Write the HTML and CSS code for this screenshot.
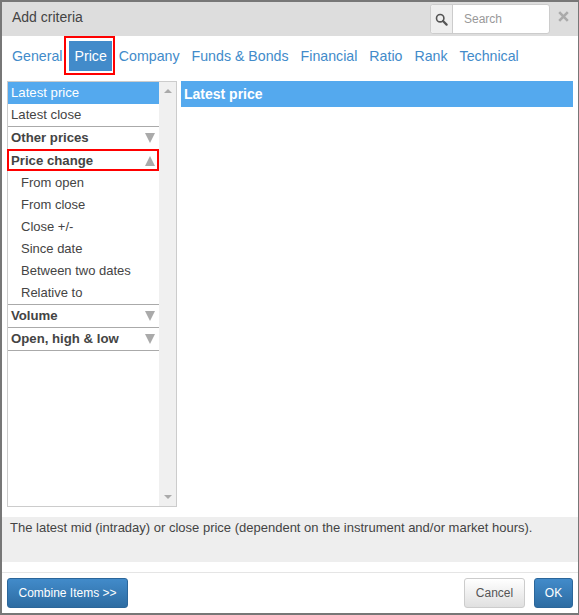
FILE: index.html
```html
<!DOCTYPE html>
<html lang="en">
<head>
<meta charset="utf-8">
<title>Add criteria</title>
<link rel="stylesheet" href="styles.css">
</head>
<body>
<div class="dialog">
  <header class="head">
    <h1 class="title">Add criteria</h1>
    <div class="search">
      <span class="search-icon">
        <svg width="13" height="13" viewBox="0 0 13 13"><circle cx="5.2" cy="5.2" r="3.7" fill="none" stroke="#555" stroke-width="1.6"/><path d="M8 8 L11.6 11.6" stroke="#555" stroke-width="2.2" stroke-linecap="round"/></svg>
      </span>
      <span class="search-input">Search</span>
    </div>
    <span class="close">
      <svg width="11" height="11" viewBox="0 0 11 11"><path d="M1.2 1.2 L9.8 9.8 M9.8 1.2 L1.2 9.8" stroke="#aaa" stroke-width="2.6"/></svg>
    </span>
  </header>
  <nav class="tabs">
    <a class="tab">General</a>
    <a class="tab active">Price</a>
    <a class="tab">Company</a>
    <a class="tab">Funds &amp; Bonds</a>
    <a class="tab">Financial</a>
    <a class="tab">Ratio</a>
    <a class="tab">Rank</a>
    <a class="tab">Technical</a>
  </nav>
  <div class="main">
    <div class="listbox">
      <div class="list">
        <div class="item selected">Latest price</div>
        <div class="item last">Latest close</div>
        <div class="group">Other prices<i class="arrow down"></i></div>
        <div class="group open marked">Price change<i class="arrow up"></i></div>
        <div class="item sub">From open</div>
        <div class="item sub">From close</div>
        <div class="item sub">Close +/-</div>
        <div class="item sub">Since date</div>
        <div class="item sub">Between two dates</div>
        <div class="item sub last">Relative to</div>
        <div class="group">Volume<i class="arrow down"></i></div>
        <div class="group">Open, high &amp; low<i class="arrow down"></i></div>
      </div>
      <div class="scrollbar">
        <i class="sb-arrow sb-up"></i>
        <i class="sb-arrow sb-down"></i>
      </div>
    </div>
    <section class="panel">
      <h2 class="panel-title">Latest price</h2>
    </section>
  </div>
  <p class="desc">The latest mid (intraday) or close price (dependent on the instrument and/or market hours).</p>
  <footer class="foot">
    <button class="btn primary">Combine Items &gt;&gt;</button>
    <span class="spacer"></span>
    <button class="btn cancel">Cancel</button>
    <button class="btn primary ok">OK</button>
  </footer>
</div>
</body>
</html>
```
FILE: styles.css
```css
* { box-sizing: border-box; }
html, body { margin: 0; padding: 0; }
body {
  width: 579px;
  height: 615px;
  overflow: hidden;
  font-family: "Liberation Sans", Arial, sans-serif;
  background: #fff;
}
.dialog {
  width: 579px;
  height: 615px;
  border-style: solid;
  border-color: #777;
  border-width: 2px 1px 2px 2px;
  background: #fff;
  display: flex;
  flex-direction: column;
}
.head {
  height: 34px;
  background: #ddd;
  display: flex;
  align-items: flex-start;
  padding-left: 10px;
  flex: none;
}
.title {
  margin: 0;
  font-size: 14px;
  font-weight: 400;
  line-height: 30px;
  color: #444;
}
.search {
  margin-left: auto;
  margin-top: 2px;
  width: 120px;
  height: 30px;
  display: flex;
  border: 1px solid #ccc;
  border-radius: 3px;
  background: #fff;
}
.search-icon {
  width: 22px;
  background: #eee;
  border-right: 1px solid #ccc;
  border-radius: 3px 0 0 3px;
  display: flex;
  align-items: center;
  justify-content: center;
}
.search-input {
  padding-left: 11px;
  font-size: 12px;
  line-height: 28px;
  color: #999;
}
.close {
  width: 28px;
  height: 30px;
  display: flex;
  justify-content: center;
  padding: 9px 2px 0 0;
}
.tabs {
  display: flex;
  height: 45px;
  padding: 5px 0 0 5px;
  flex: none;
  gap: 2px;
}
.tab {
  height: 30px;
  padding: 0 5px;
  font-size: 14.2px;
  line-height: 30px;
  color: #428bca;
}
.tab.active {
  position: relative;
  background: #428bca;
  color: #fff;
}
.tab.active::after {
  content: "";
  position: absolute;
  left: -5px;
  right: -3px;
  top: -5px;
  bottom: -4px;
  border: 2px solid #f00;
}
.main {
  display: flex;
  height: 426px;
  padding-left: 5px;
  flex: none;
}
.listbox {
  width: 170px;
  border: 1px solid #ccc;
  display: flex;
  flex: none;
}
.list { width: 151px; flex: none; }
.item {
  height: 22px;
  padding-left: 3px;
  font-size: 13.2px;
  line-height: 22px;
  color: #444;
}
.item.selected { background: #54a9ee; color: #fff; }
.item.sub { padding-left: 13px; font-size: 13px; }
.item.last { height: 23px; border-bottom: 1px solid #aaa; }
.group {
  position: relative;
  height: 23px;
  padding-left: 3px;
  font-size: 13.2px;
  font-weight: 700;
  line-height: 22px;
  color: #444;
  border-bottom: 1px solid #aaa;
}
.group.open { border-bottom: 0; height: 22px; }
.group.marked::after {
  content: "";
  position: absolute;
  left: -1px;
  right: 0;
  top: -1px;
  bottom: 1px;
  border: 2px solid #f00;
}
.arrow {
  position: absolute;
  right: 4px;
  top: 6px;
  width: 0;
  height: 0;
  border-left: 5px solid transparent;
  border-right: 5px solid transparent;
}
.arrow.down { border-top: 10px solid #aaa; }
.arrow.up { border-bottom: 10px solid #aaa; }
.scrollbar {
  flex: 1;
  background: #f0f0f0;
  display: flex;
  flex-direction: column;
  justify-content: space-between;
  align-items: center;
  padding: 7px 0;
}
.sb-arrow {
  width: 0;
  height: 0;
  border-left: 4px solid transparent;
  border-right: 4px solid transparent;
}
.sb-up { border-bottom: 4px solid #aaa; }
.sb-down { border-top: 4px solid #aaa; }
.panel { width: 392px; margin-left: 4px; flex: none; }
.panel-title {
  margin: 0;
  height: 26px;
  padding-left: 3px;
  background: #54a9ee;
  color: #fff;
  font-size: 14px;
  font-weight: 700;
  line-height: 26px;
}
.desc {
  margin: 10px 0 0;
  height: 45px;
  padding: 2px 8px;
  background: #eee;
  color: #444;
  font-size: 13px;
  line-height: 18px;
  flex: none;
}
.foot {
  margin-top: 10px;
  border-top: 1px solid #e5e5e5;
  padding: 5px 5px 0;
  display: flex;
  gap: 9px;
  flex: 1;
  align-items: flex-start;
}
.spacer { flex: 1; margin-right: -1px; }
.btn {
  height: 30px;
  border-radius: 3px;
  font-family: inherit;
  font-size: 12px;
  padding: 0;
}
.primary {
  width: 121px;
  background: linear-gradient(#428bca, #2d6ca2);
  border: 1px solid #2b669a;
  color: #fff;
}
.ok { width: 39px; }
.cancel {
  width: 61px;
  background: linear-gradient(#fff, #e0e0e0);
  border: 1px solid #ccc;
  color: #555;
}
```
